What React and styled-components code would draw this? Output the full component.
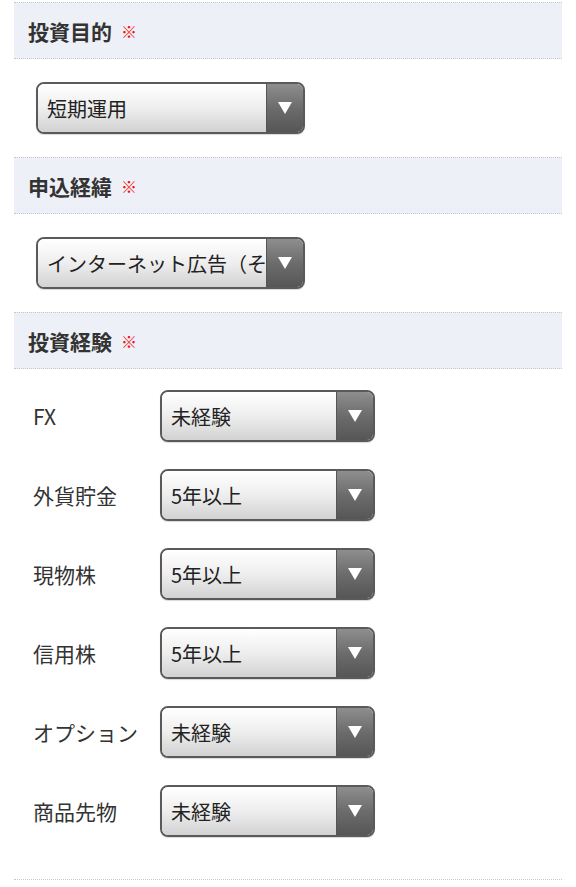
import React from 'react'
import styled, { createGlobalStyle } from 'styled-components'

const GlobalStyle = createGlobalStyle`
  body {
    margin: 0;
    background: #fff;
    font-family: "Noto Sans CJK JP", "Noto Sans", sans-serif;
    color: #333;
  }
`

const Container = styled.div`
  padding: 2px 14px 0;
`

const SectionHeader = styled.div`
  display: flex;
  align-items: center;
  height: 55px;
  padding-left: 14px;
  background: #edf1f7;
  border-top: 1px dotted #c8c8c8;
  border-bottom: 1px dotted #c8c8c8;
`

const Title = styled.h2`
  margin: 0;
  font-size: 21px;
  font-weight: 700;
  color: #333;
`

const Required = styled.span`
  margin-left: 9px;
  font-size: 16px;
  font-weight: 700;
  color: #f01010;
`

const SelectArea = styled.div`
  padding: 23px 0 23px 22px;
`

const Rows = styled.div`
  display: flex;
  flex-direction: column;
  gap: 27px;
  padding: 21px 0 42px 19px;
  border-bottom: 1px dotted #c8c8c8;
`

const Row = styled.div`
  display: flex;
  align-items: center;
`

const Label = styled.div`
  width: 127px;
  font-size: 21px;
  color: #333;
`

const SelectBox = styled.div`
  display: flex;
  width: ${p => p.$width}px;
  height: 52px;
  box-sizing: border-box;
  border: 2px solid #5a5a5a;
  border-radius: 8px;
  overflow: hidden;
  box-shadow: 0 1px 1px rgba(0, 0, 0, 0.15);
`

const SelectText = styled.div`
  flex: 1;
  display: flex;
  align-items: center;
  padding-left: 9px;
  font-size: 20px;
  color: #222;
  white-space: nowrap;
  overflow: hidden;
  background: linear-gradient(to bottom, #ffffff 0%, #eeeeee 50%, #d2d2d2 100%);
`

const ArrowPart = styled.div`
  width: 36px;
  flex-shrink: 0;
  display: flex;
  align-items: center;
  justify-content: center;
  border-left: 1px solid #555;
  background: linear-gradient(to bottom, #8e8e8e 0%, #6c6c6c 50%, #565656 100%);
`

function Select({ value, width = 269 }) {
  return (
    <SelectBox $width={width}>
      <SelectText>{value}</SelectText>
      <ArrowPart>
        <svg width="14" height="12" viewBox="0 0 14 12">
          <polygon points="0,0 14,0 7,12" fill="#fff" />
        </svg>
      </ArrowPart>
    </SelectBox>
  )
}

function Header({ children }) {
  return (
    <SectionHeader>
      <Title>{children}</Title>
      <Required>※</Required>
    </SectionHeader>
  )
}

const experience = [
  { label: 'FX', value: '未経験' },
  { label: '外貨貯金', value: '5年以上' },
  { label: '現物株', value: '5年以上' },
  { label: '信用株', value: '5年以上' },
  { label: 'オプション', value: '未経験' },
  { label: '商品先物', value: '未経験' },
]

export default function App() {
  return (
    <Container>
      <GlobalStyle />
      <Header>投資目的</Header>
      <SelectArea>
        <Select value="短期運用" />
      </SelectArea>
      <Header>申込経緯</Header>
      <SelectArea>
        <Select value="インターネット広告（その他）" />
      </SelectArea>
      <Header>投資経験</Header>
      <Rows>
        {experience.map(item => (
          <Row key={item.label}>
            <Label>{item.label}</Label>
            <Select value={item.value} width={215} />
          </Row>
        ))}
      </Rows>
    </Container>
  )
}
